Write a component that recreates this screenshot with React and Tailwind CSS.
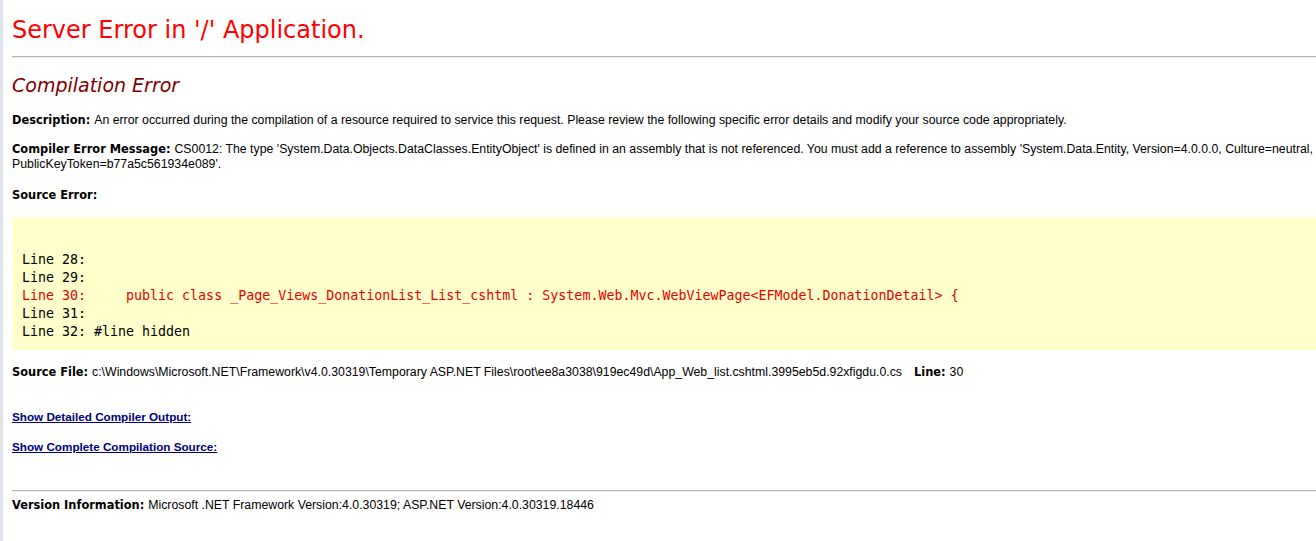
import React from "react";

const Label = ({ children }) => (
  <b className="font-['DejaVu_Sans'] font-bold text-[11.4px] text-black">{children}</b>
);

const codeLines = [
  { text: " ", red: false },
  { text: "Line 28: ", red: false },
  { text: "Line 29: ", red: false },
  {
    text: "Line 30:     public class _Page_Views_DonationList_List_cshtml : System.Web.Mvc.WebViewPage<EFModel.DonationDetail> {",
    red: true,
  },
  { text: "Line 31: ", red: false },
  { text: "Line 32: #line hidden", red: false },
];

const App = () => {
  return (
    <div className="min-h-[541px] bg-white border-l-[3px] border-[#dde4ec] pl-[9px] font-['Liberation_Sans'] text-[12.3px] text-black overflow-hidden">
      <h1 className="pt-[14px] font-['DejaVu_Sans'] text-[24px] leading-[32px] text-[#ff0000] whitespace-nowrap">
        Server Error in '/' Application.
      </h1>
      <div className="mt-[10px] border-t border-t-[#b4b4b4] border-b border-b-[#f0f0f0]" />

      <h2 className="mt-[15px] font-['DejaVu_Sans'] italic text-[19px] leading-[24px] text-[#800000]">
        Compilation Error
      </h2>

      <div className="mt-[15px] leading-[16px] whitespace-nowrap">
        <Label>Description: </Label>
        An error occurred during the compilation of a resource required to service this request. Please review the following specific error details and modify your source code appropriately.
      </div>

      <div className="mt-[14px] leading-[15px] whitespace-nowrap">
        <Label>Compiler Error Message: </Label>
        CS0012: The type 'System.Data.Objects.DataClasses.EntityObject' is defined in an assembly that is not referenced. You must add a reference to assembly 'System.Data.Entity, Version=4.0.0.0, Culture=neutral,
        <br />
        PublicKeyToken=b77a5c561934e089'.
      </div>

      <div className="mt-[15px] leading-[16px]">
        <Label>Source Error:</Label>
      </div>

      <div className="mt-[14px] bg-[#ffffcc] pl-[10px] pt-[16px] pb-[9px]">
        {codeLines.map((line, index) => (
          <pre
            key={index}
            className={`font-['DejaVu_Sans_Mono'] text-[13.3px] leading-[18px] whitespace-pre ${
              line.red ? "text-[#e60000]" : "text-black"
            }`}
          >
            {line.text}
          </pre>
        ))}
      </div>

      <div className="mt-[14px] leading-[16px] whitespace-nowrap">
        <Label>Source File: </Label>
        c:\Windows\Microsoft.NET\Framework\v4.0.30319\Temporary ASP.NET Files\root\ee8a3038\919ec49d\App_Web_list.cshtml.3995eb5d.92xfigdu.0.cs
        <span className="inline-block w-[12px]" />
        <Label>Line: </Label>30
      </div>

      <div className="mt-[29px] leading-[16px] font-bold underline text-[#000080] text-[11.7px]">
        Show Detailed Compiler Output:
      </div>
      <div className="mt-[14px] leading-[16px] font-bold underline text-[#000080] text-[11.7px]">
        Show Complete Compilation Source:
      </div>

      <div className="mt-[35px] border-t border-t-[#b4b4b4] border-b border-b-[#f0f0f0]" />

      <div className="mt-[5px] leading-[16px] whitespace-nowrap">
        <Label>Version Information: </Label>
        Microsoft .NET Framework Version:4.0.30319; ASP.NET Version:4.0.30319.18446
      </div>
    </div>
  );
};

export default App;
